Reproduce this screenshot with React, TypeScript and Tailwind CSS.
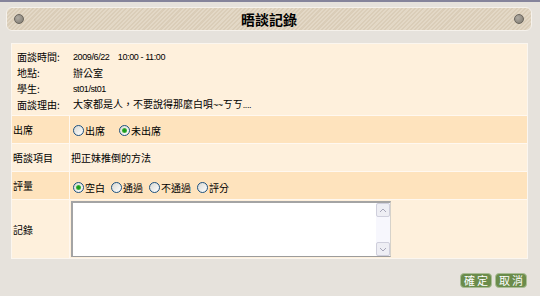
import React from 'react';

const cjk = { fontFamily: '"Noto Sans CJK TC", "Liberation Sans", sans-serif' };

const Radio = ({ checked = false }: { checked?: boolean }) => (
  <span className="inline-flex items-center justify-center w-[11px] h-[11px] rounded-full border border-[#1c5180] bg-[linear-gradient(135deg,#d8d8d2,#ffffff)] shrink-0">
    {checked && <span className="w-[5px] h-[5px] rounded-full bg-[radial-gradient(circle,#1a9a1a_30%,#6fd36f_100%)]" />}
  </span>
);

const Option = ({ label, checked = false, className = '' }: { label: string; checked?: boolean; className?: string }) => (
  <span className={`inline-flex items-center ${className}`}>
    <Radio checked={checked} />
    <span className="ml-[1px]">{label}</span>
  </span>
);

// latin bits render narrower than the cjk text in the original
const Lat = ({ children }: { children: React.ReactNode }) => (
  <span className="text-[9px] tracking-[-0.4px]" style={{ fontFamily: '"Liberation Sans", sans-serif' }}>{children}</span>
);

export default function App() {
  const info = [
    { label: '面談時間:', value: <Lat>2009/6/22&nbsp;&nbsp;&nbsp;&nbsp;10:00 - 11:00</Lat> },
    { label: '地點:', value: '辦公室' },
    { label: '學生:', value: <Lat>st01/st01</Lat> },
    { label: '面談理由:', value: <>大家都是人，不要說得那麼白唄<Lat>~~</Lat>ㄎㄎ<Lat>....</Lat></> },
  ];

  return (
    <div className="w-[540px] h-[296px] bg-[#e6e2dc] border-t-2 border-[#85849b] text-black text-[10px] overflow-hidden" style={cjk}>
      {/* Header bar */}
      <div className="mt-[5px] ml-[6px] w-[526px] h-[24px] rounded-[6px] border border-[#f5f1eb] bg-[repeating-linear-gradient(135deg,#dacdb8_0px,#dacdb8_1.5px,#e3d8c6_1.5px,#e3d8c6_3px)] flex items-center px-[7px]">
        <span className="w-[10px] h-[10px] rounded-full border border-[#6a655d] bg-[radial-gradient(circle_at_35%_35%,#b0aba3,#7e796f)]" />
        <div className="flex-1 text-center text-[14px] font-bold leading-none">晤談記錄</div>
        <span className="w-[10px] h-[10px] rounded-full border border-[#6a655d] bg-[radial-gradient(circle_at_35%_35%,#b0aba3,#7e796f)]" />
      </div>

      {/* Content panel */}
      <div className="mt-[12px] ml-[11px] w-[517px] border border-[#fbf6ef] bg-[#fff8f0] flex flex-col gap-[1px]">
        <div className="bg-[#fef0dc] pt-[4px] pb-[3px] pl-[5px]">
          {info.map((r) => (
            <div key={r.label} className="flex h-[16px] items-center">
              <span className="w-[56px]">{r.label}</span>
              <span>{r.value}</span>
            </div>
          ))}
        </div>

        <div className="flex h-[27px] gap-[1px]">
          <div className="w-[57px] bg-[#fee3bd] pl-[1px] flex items-center">出席</div>
          <div className="flex-1 bg-[#fee3bd] flex items-center pl-[3px] pt-[1px]">
            <Option label="出席" />
            <Option label="未出席" checked className="ml-[14px]" />
          </div>
        </div>

        <div className="flex h-[27px] gap-[1px]">
          <div className="w-[57px] bg-[#fef0dc] pl-[1px] flex items-center">晤談項目</div>
          <div className="flex-1 bg-[#fef0dc] flex items-center pl-[1px]">把正妹推倒的方法</div>
        </div>

        <div className="flex h-[27px] gap-[1px]">
          <div className="w-[57px] bg-[#fee3bd] pl-[1px] flex items-center">評量</div>
          <div className="flex-1 bg-[#fee3bd] flex items-center pl-[3px] pt-[3px] gap-[6px]">
            <Option label="空白" checked />
            <Option label="通過" />
            <Option label="不通過" />
            <Option label="評分" />
          </div>
        </div>

        <div className="flex h-[58px] gap-[1px]">
          <div className="w-[57px] bg-[#fef0dc] pl-[1px] flex items-center">記錄</div>
          <div className="flex-1 bg-[#fef0dc] pl-[1px] pt-[1px]">
            <div className="w-[320px] h-[56px] bg-white border-t-2 border-l-2 border-t-[#a4a4a4] border-l-[#a4a4a4] border-r border-b border-r-[#d6d2ca] border-b-[#9c9c9c] flex justify-end">
              <div className="w-[14px] h-full bg-[#f7f7fd] flex flex-col justify-between">
                <div className="h-[14px] bg-[#eeeef4] border border-[#cfcfdc] rounded-[2px] flex items-center justify-center">
                  <svg width="8" height="5" viewBox="0 0 8 5"><path d="M1 4 L4 1 L7 4" stroke="#a6a6b8" fill="none" strokeWidth="1" /></svg>
                </div>
                <div className="h-[14px] bg-[#eeeef4] border border-[#cfcfdc] rounded-[2px] flex items-center justify-center">
                  <svg width="8" height="5" viewBox="0 0 8 5"><path d="M1 1 L4 4 L7 1" stroke="#a6a6b8" fill="none" strokeWidth="1" /></svg>
                </div>
              </div>
            </div>
          </div>
        </div>
      </div>

      {/* Buttons */}
      <div className="mt-[14px] flex justify-end pr-[13px] gap-[3px]">
        <button className="w-[32px] h-[15px] rounded-[4px] bg-[#6b8c4b] border border-[#a9bd95] text-white text-[11px] leading-none tracking-[2px] pl-[2px] flex items-center justify-center">確定</button>
        <button className="w-[32px] h-[15px] rounded-[4px] bg-[#6b8c4b] border border-[#a9bd95] text-white text-[11px] leading-none tracking-[2px] pl-[2px] flex items-center justify-center">取消</button>
      </div>
    </div>
  );
}
